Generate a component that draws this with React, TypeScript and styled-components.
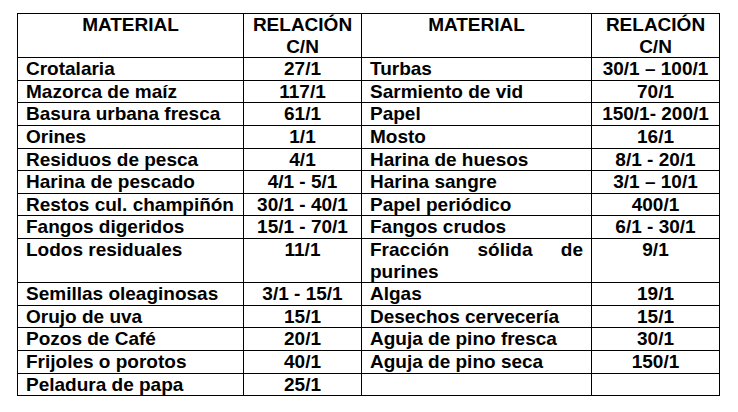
import React from 'react'
import styled, { createGlobalStyle } from 'styled-components'

const GlobalStyle = createGlobalStyle`
  html, body {
    margin: 0;
    padding: 0;
    background: #ffffff;
  }
  body {
    font-family: 'Liberation Sans', Arial, sans-serif;
    color: #000000;
  }
`

const Page = styled.div`
  padding: 13px 0 0 17px;
`

const Table = styled.table`
  border-collapse: collapse;
  table-layout: fixed;
  width: 702px;
  font-size: 19px;
  font-weight: bold;
  line-height: 21.6px;
`

const Cell = styled.td<{ align?: 'left' | 'center' | 'justify' }>`
  border: 1px solid #000;
  padding: 0 8px 0 8px;
  vertical-align: top;
  text-align: ${({ align }) => align || 'left'};
  white-space: ${({ align }) => (align === 'justify' ? 'normal' : 'nowrap')};
  overflow: hidden;
`

const HeadCell = styled.th`
  border: 1px solid #000;
  padding: 0;
  vertical-align: top;
  text-align: center;
  font-weight: bold;
`

type Entry = [string, string] | null

const rows: { left: Entry; right: Entry; justify?: boolean }[] = [
  { left: ['Crotalaria', '27/1'], right: ['Turbas', '30/1 – 100/1'] },
  { left: ['Mazorca de maíz', '117/1'], right: ['Sarmiento de vid', '70/1'] },
  { left: ['Basura urbana fresca', '61/1'], right: ['Papel', '150/1- 200/1'] },
  { left: ['Orines', '1/1'], right: ['Mosto', '16/1'] },
  { left: ['Residuos de pesca', '4/1'], right: ['Harina de huesos', '8/1 - 20/1'] },
  { left: ['Harina de pescado', '4/1 - 5/1'], right: ['Harina sangre', '3/1 – 10/1'] },
  { left: ['Restos cul. champiñón', '30/1 - 40/1'], right: ['Papel periódico', '400/1'] },
  { left: ['Fangos digeridos', '15/1 - 70/1'], right: ['Fangos crudos', '6/1 - 30/1'] },
  { left: ['Lodos residuales', '11/1'], right: ['Fracción sólida de purines', '9/1'], justify: true },
  { left: ['Semillas oleaginosas', '3/1 - 15/1'], right: ['Algas', '19/1'] },
  { left: ['Orujo de uva', '15/1'], right: ['Desechos cervecería', '15/1'] },
  { left: ['Pozos de Café', '20/1'], right: ['Aguja de pino fresca', '30/1'] },
  { left: ['Frijoles o porotos', '40/1'], right: ['Aguja de pino seca', '150/1'] },
  { left: ['Peladura de papa', '25/1'], right: null },
]

export default function App() {
  return (
    <Page>
      <GlobalStyle />
      <Table>
        <colgroup>
          <col style={{ width: 226 }} />
          <col style={{ width: 118 }} />
          <col style={{ width: 230 }} />
          <col style={{ width: 128 }} />
        </colgroup>
        <thead>
          <tr>
            <HeadCell>MATERIAL</HeadCell>
            <HeadCell>
              RELACIÓN
              <br />
              C/N
            </HeadCell>
            <HeadCell>MATERIAL</HeadCell>
            <HeadCell>
              RELACIÓN
              <br />
              C/N
            </HeadCell>
          </tr>
        </thead>
        <tbody>
          {rows.map((row, i) => (
            <tr key={i}>
              <Cell>{row.left ? row.left[0] : ''}</Cell>
              <Cell align="center">{row.left ? row.left[1] : ''}</Cell>
              <Cell align={row.justify ? 'justify' : 'left'}>{row.right ? row.right[0] : '\u00a0'}</Cell>
              <Cell align="center">{row.right ? row.right[1] : ''}</Cell>
            </tr>
          ))}
        </tbody>
      </Table>
    </Page>
  )
}
